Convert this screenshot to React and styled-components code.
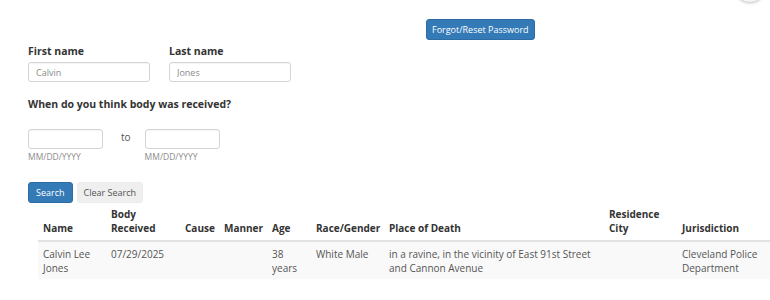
import styled, { createGlobalStyle } from 'styled-components';

const GlobalStyle = createGlobalStyle`
  html, body {
    margin: 0;
    padding: 0;
    background: #fff;
    overflow: hidden;
  }
  body {
    font-family: "Open Sans", "Liberation Sans", sans-serif;
    color: #333;
  }
`;

const Page = styled.div`
  position: relative;
  width: 770px;
  height: 300px;
  padding-left: 28px;
  box-sizing: border-box;
  display: flex;
  flex-direction: column;
`;

const CornerShade = styled.div`
  position: absolute;
  top: -30px;
  right: 4px;
  width: 32px;
  height: 32px;
  border-radius: 50%;
  background: #f4f4f4;
  box-shadow: 0 1px 3px rgba(0, 0, 0, 0.25);
`;

const TopBar = styled.div`
  padding-top: 19px;
  padding-left: 398px;
  display: flex;
`;

const Button = styled.button`
  font-family: inherit;
  font-size: 9px;
  height: 21px;
  padding: 0 ${p => p.$pad || 7}px;
  border-radius: 3px;
  cursor: pointer;
  border: 1px solid ${p => (p.$primary ? '#2e6da4' : '#ececec')};
  background: ${p => (p.$primary ? '#337ab7' : '#efefef')};
  color: ${p => (p.$primary ? '#fff' : '#555')};
  line-height: 19px;
`;

const NameRow = styled.div`
  display: flex;
  gap: 19px;
  margin-top: 4px;
`;

const Field = styled.div`
  display: flex;
  flex-direction: column;
`;

const Label = styled.label`
  font-size: 10.5px;
  font-weight: 700;
  line-height: 14px;
  color: #333;
  margin-bottom: 4px;
`;

const Input = styled.input`
  box-sizing: border-box;
  width: ${p => p.$w}px;
  height: 20px;
  border: 1px solid #d4d4d4;
  border-radius: 3px;
  padding: 0 7px;
  font-family: inherit;
  font-size: 9px;
  color: #555;
  box-shadow: inset 0 1px 1px rgba(0, 0, 0, 0.04);
  &::placeholder {
    color: #8a8a8a;
  }
`;

const Question = styled.div`
  font-size: 10.5px;
  font-weight: 700;
  line-height: 14px;
  margin-top: 15px;
`;

const DateRow = styled.div`
  display: flex;
  align-items: flex-start;
  margin-top: 18px;
`;

const To = styled.span`
  font-size: 10px;
  color: #555;
  line-height: 14px;
  padding-top: 1px;
  margin: 0 14px 0 18px;
`;

const Hint = styled.span`
  font-size: 8.5px;
  line-height: 12px;
  color: #8c8c8c;
  margin-top: 2px;
`;

const Actions = styled.div`
  display: flex;
  gap: 4px;
  margin-top: 19px;
`;

const Table = styled.table`
  margin-left: 10px;
  width: 739px;
  table-layout: fixed;
  border-collapse: collapse;
  font-size: 10px;
  line-height: 14px;
`;

const Th = styled.th`
  text-align: left;
  vertical-align: bottom;
  font-weight: 700;
  color: #333;
  padding: 4px 5px 5px;
  border-bottom: 2px solid #e2e2e2;
`;

const Tr = styled.tr`
  background: #f9f9f9;
`;

const Td = styled.td`
  vertical-align: top;
  color: #555;
  padding: 5px 5px 4px;
`;

const columns = [
  { label: 'Name', width: 68 },
  { label: 'Body Received', width: 74 },
  { label: 'Cause', width: 39 },
  { label: 'Manner', width: 48 },
  { label: 'Age', width: 44 },
  { label: 'Race/Gender', width: 73 },
  { label: 'Place of Death', width: 220 },
  { label: 'Residence City', width: 73 },
  { label: 'Jurisdiction', width: 100 },
];

const rows = [
  [
    'Calvin Lee Jones',
    '07/29/2025',
    '',
    '',
    '38 years',
    'White Male',
    'in a ravine, in the vicinity of East 91st Street and Cannon Avenue',
    '',
    'Cleveland Police Department',
  ],
];

export default function App() {
  return (
    <Page>
      <GlobalStyle />
      <CornerShade />
      <TopBar>
        <Button $primary $pad={5}>Forgot/Reset Password</Button>
      </TopBar>

      <NameRow>
        <Field>
          <Label>First name</Label>
          <Input $w={122} placeholder="Calvin" />
        </Field>
        <Field>
          <Label>Last name</Label>
          <Input $w={122} placeholder="Jones" />
        </Field>
      </NameRow>

      <Question>When do you think body was received?</Question>

      <DateRow>
        <Field>
          <Input $w={75} />
          <Hint>MM/DD/YYYY</Hint>
        </Field>
        <To>to</To>
        <Field>
          <Input $w={75} />
          <Hint>MM/DD/YYYY</Hint>
        </Field>
      </DateRow>

      <Actions>
        <Button $primary>Search</Button>
        <Button $pad={6}>Clear Search</Button>
      </Actions>

      <Table>
        <colgroup>
          {columns.map(c => (
            <col key={c.label} style={{ width: c.width }} />
          ))}
        </colgroup>
        <thead>
          <tr>
            {columns.map(c => (
              <Th key={c.label}>{c.label}</Th>
            ))}
          </tr>
        </thead>
        <tbody>
          {rows.map((r, i) => (
            <Tr key={i}>
              {r.map((cell, j) => (
                <Td key={j}>{cell}</Td>
              ))}
            </Tr>
          ))}
        </tbody>
      </Table>
    </Page>
  );
}
